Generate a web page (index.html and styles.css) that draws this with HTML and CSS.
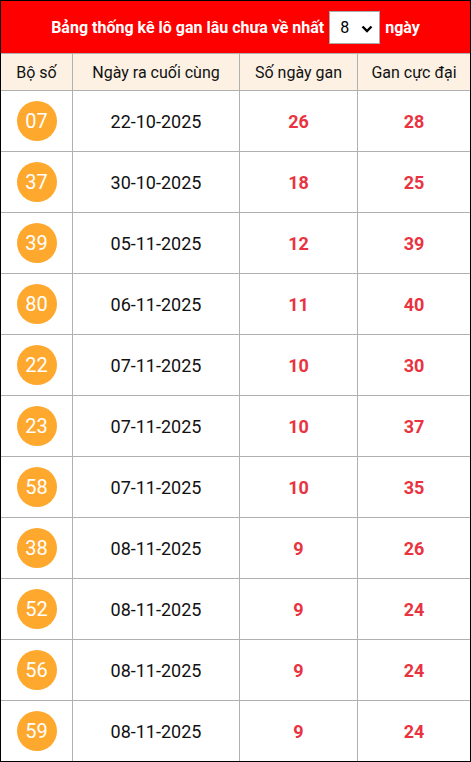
FILE: index.html
```html
<!DOCTYPE html>
<html lang="vi">
<head>
<meta charset="utf-8">
<title>Lô gan</title>
<link rel="stylesheet" href="styles.css">
</head>
<body>
<div class="box">
  <div class="title">
    <span>Bảng thống kê lô gan lâu chưa về nhất</span>
    <span class="sel"><span class="sel-val">8</span><svg class="chev" width="12" height="8" viewBox="0 0 12 8"><path d="M1.5 1.5 L6 6 L10.5 1.5" fill="none" stroke="#000" stroke-width="2.4"/></svg></span>
    <span>ngày</span>
  </div>
  <div class="grid">
    <div class="th">Bộ số</div><div class="th">Ngày ra cuối cùng</div><div class="th">Số ngày gan</div><div class="th">Gan cực đại</div>
    <div class="td"><span class="ball">07</span></div><div class="td date">22-10-2025</div><div class="td num">26</div><div class="td num">28</div>
    <div class="td"><span class="ball">37</span></div><div class="td date">30-10-2025</div><div class="td num">18</div><div class="td num">25</div>
    <div class="td"><span class="ball">39</span></div><div class="td date">05-11-2025</div><div class="td num">12</div><div class="td num">39</div>
    <div class="td"><span class="ball">80</span></div><div class="td date">06-11-2025</div><div class="td num">11</div><div class="td num">40</div>
    <div class="td"><span class="ball">22</span></div><div class="td date">07-11-2025</div><div class="td num">10</div><div class="td num">30</div>
    <div class="td"><span class="ball">23</span></div><div class="td date">07-11-2025</div><div class="td num">10</div><div class="td num">37</div>
    <div class="td"><span class="ball">58</span></div><div class="td date">07-11-2025</div><div class="td num">10</div><div class="td num">35</div>
    <div class="td"><span class="ball">38</span></div><div class="td date">08-11-2025</div><div class="td num">9</div><div class="td num">26</div>
    <div class="td"><span class="ball">52</span></div><div class="td date">08-11-2025</div><div class="td num">9</div><div class="td num">24</div>
    <div class="td"><span class="ball">56</span></div><div class="td date">08-11-2025</div><div class="td num">9</div><div class="td num">24</div>
    <div class="td"><span class="ball">59</span></div><div class="td date">08-11-2025</div><div class="td num">9</div><div class="td num">24</div>
  </div>
</div>
</body>
</html>
```
FILE: styles.css
```css
* { box-sizing: border-box; }
html, body { margin: 0; padding: 0; background: #fff; }
body { font-family: Roboto, "Noto Sans", Arial, sans-serif; color: #000; }
.box { width: 471px; height: 762px; border: 1px solid #000; overflow: hidden; }
.title {
  height: 52px;
  background: #f00;
  color: #fff;
  font-weight: 700;
  font-size: 16px;
  display: flex;
  align-items: center;
  justify-content: center;
  gap: 5px;
}
.sel {
  position: relative;
  display: flex;
  align-items: center;
  width: 51px;
  height: 33px;
  background: #fff;
  border: 1px solid #a9a9a9;
  color: #000;
  font-weight: 400;
  font-size: 16px;
  padding-left: 10px;
}
.chev { position: absolute; right: 6px; top: 13px; }
.grid {
  display: grid;
  grid-template-columns: 71px 166px 117px 112px;
  grid-template-rows: 36px repeat(11, 60px);
  gap: 1px;
  background: #b0b0b0;
  border-top: 1px solid #b0b0b0;
}
.th {
  background: #fdf1e4;
  font-size: 16px;
  display: flex;
  align-items: center;
  justify-content: center;
  color: #111;
}
.td {
  background: #fff;
  display: flex;
  align-items: center;
  justify-content: center;
}
.date { font-size: 18px; color: #111; }
.num { font-size: 18px; font-weight: 700; color: #ea3340; }
.ball {
  width: 40px;
  height: 40px;
  border-radius: 50%;
  background: #ffa82e;
  color: #fff;
  font-size: 20px;
  display: flex;
  align-items: center;
  justify-content: center;
}
```
